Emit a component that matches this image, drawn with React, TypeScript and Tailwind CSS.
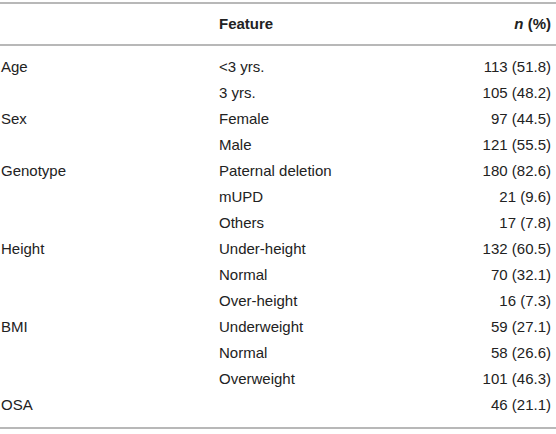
import React from "react";

const rows: [string, string, string][] = [
  ["Age", "<3 yrs.", "113 (51.8)"],
  ["", "3 yrs.", "105 (48.2)"],
  ["Sex", "Female", "97 (44.5)"],
  ["", "Male", "121 (55.5)"],
  ["Genotype", "Paternal deletion", "180 (82.6)"],
  ["", "mUPD", "21 (9.6)"],
  ["", "Others", "17 (7.8)"],
  ["Height", "Under-height", "132 (60.5)"],
  ["", "Normal", "70 (32.1)"],
  ["", "Over-height", "16 (7.3)"],
  ["BMI", "Underweight", "59 (27.1)"],
  ["", "Normal", "58 (26.6)"],
  ["", "Overweight", "101 (46.3)"],
  ["OSA", "", "46 (21.1)"],
];

const App: React.FC = () => {
  return (
    <div className="w-[556px] h-[434px] bg-white pt-[2px] font-['Liberation_Sans',Arial,sans-serif] text-[15px] text-[#222]">
      <table className="w-full border-collapse table-fixed">
        <thead>
          <tr className="border-t-2 border-b-2 border-[#b8b8b8] h-[42px]">
            <th className="w-[219px]"></th>
            <th className="text-left font-bold">Feature</th>
            <th className="text-right font-bold pr-[5px]">
              <i>n</i> (%)
            </th>
          </tr>
        </thead>
        <tbody className="border-b-2 border-[#b8b8b8]">
          <tr className="h-[9px]">
            <td colSpan={3}></td>
          </tr>
          {rows.map((r, i) => (
            <tr key={i} className="h-[26px]">
              <td className="pl-[1px]">{r[0]}</td>
              <td>{r[1]}</td>
              <td className="text-right pr-[5px]">{r[2]}</td>
            </tr>
          ))}
          <tr className="h-[10px]">
            <td colSpan={3}></td>
          </tr>
        </tbody>
      </table>
    </div>
  );
};

export default App;
